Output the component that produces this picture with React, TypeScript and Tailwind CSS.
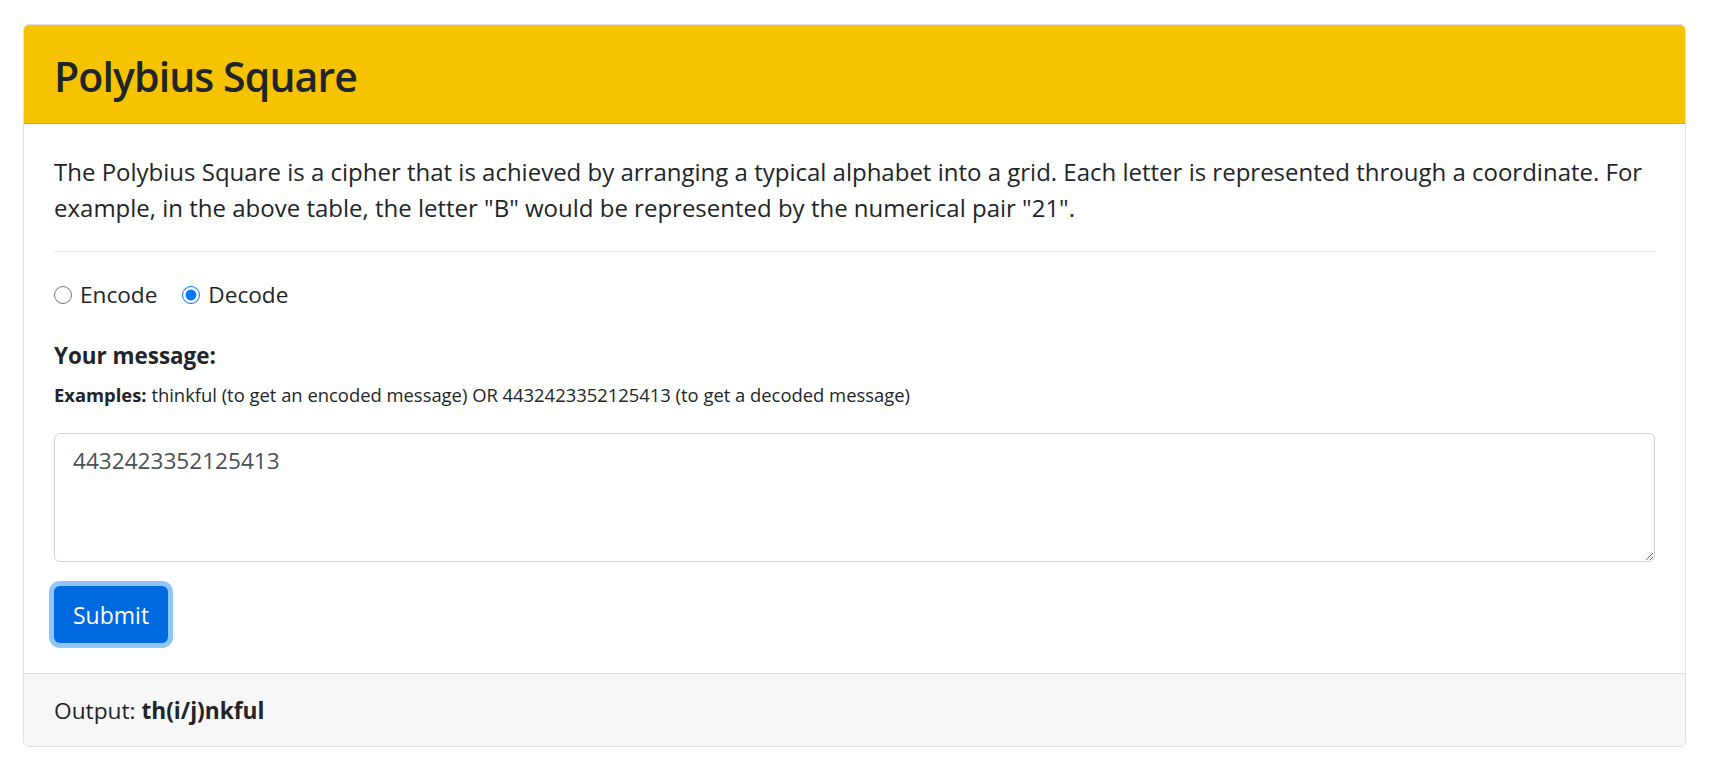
import { useState } from 'react'

export default function App() {
    const [mode, setMode] = useState<'encode' | 'decode'>('decode')
    const [message, setMessage] = useState('4432423352125413')

    return (
        <div className="min-h-screen bg-white pt-[24px] pl-[23px] font-['Open_Sans',sans-serif] text-[#212529]">
            <div className="w-[1663px] rounded-[6px] border border-[#dfdfdf] overflow-hidden">
                <div className="h-[99px] flex items-center px-[30px] bg-[#f6c300] border-b border-[#d6aa00]">
                    <h3 className="mt-[3px] text-[41px] leading-[50px] font-semibold tracking-[-0.9px]">Polybius Square</h3>
                </div>

                <div className="p-[30px] bg-white">
                    <p className="text-[24px] leading-[36px] mb-[25px]">
                        The Polybius Square is a cipher that is achieved by arranging a typical alphabet into a grid.
                        Each letter is represented through a coordinate. For example, in the above table, the letter
                        "B" would be represented by the numerical pair "21".
                    </p>
                    <hr className="border-t border-[#e6e6e6] mb-[25px]" />

                    <div className="flex items-center h-[36px] text-[22.6px]">
                        <label className="flex items-center mr-[25px]">
                            <input
                                type="radio"
                                name="mode"
                                checked={mode === 'encode'}
                                onChange={() => setMode('encode')}
                                className="w-[18px] h-[18px] m-0 accent-[#0075ff]"
                            />
                            <span className="ml-[8px]">Encode</span>
                        </label>
                        <label className="flex items-center">
                            <input
                                type="radio"
                                name="mode"
                                checked={mode === 'decode'}
                                onChange={() => setMode('decode')}
                                className="w-[18px] h-[18px] m-0 accent-[#0075ff]"
                            />
                            <span className="ml-[8px]">Decode</span>
                        </label>
                    </div>

                    <div className="mt-[25px]">
                        <label className="block text-[22.4px] leading-[36px] font-bold">Your message:</label>
                        <small className="block mt-[6px] text-[18.4px] leading-[29px]">
                            <strong className="font-bold">Examples:</strong> thinkful (to get an encoded message) OR
                            4432423352125413 (to get a decoded message)
                        </small>
                        <textarea
                            rows={3}
                            value={message}
                            onChange={(e) => setMessage(e.target.value)}
                            className="block w-full h-[129px] mt-[24px] px-[18px] py-[9px] text-[22.6px] leading-[36px] text-[#495057] border border-[#ced4da] rounded-[6px] outline-none"
                        />
                    </div>

                    <button className="mt-[24px] h-[57px] px-[19px] rounded-[6px] bg-[#0069e0] text-white text-[23px] leading-[36px] shadow-[0_0_0_5px_#8fc4ff]">
                        Submit
                    </button>
                </div>

                <div className="px-[30px] pt-[19px] pb-[17px] bg-[#f7f7f7] border-t border-[#dfdfdf] text-[22.7px] leading-[36px]">
                    Output: <strong className="font-bold">th(i/j)nkful</strong>
                </div>
            </div>
        </div>
    )
}
